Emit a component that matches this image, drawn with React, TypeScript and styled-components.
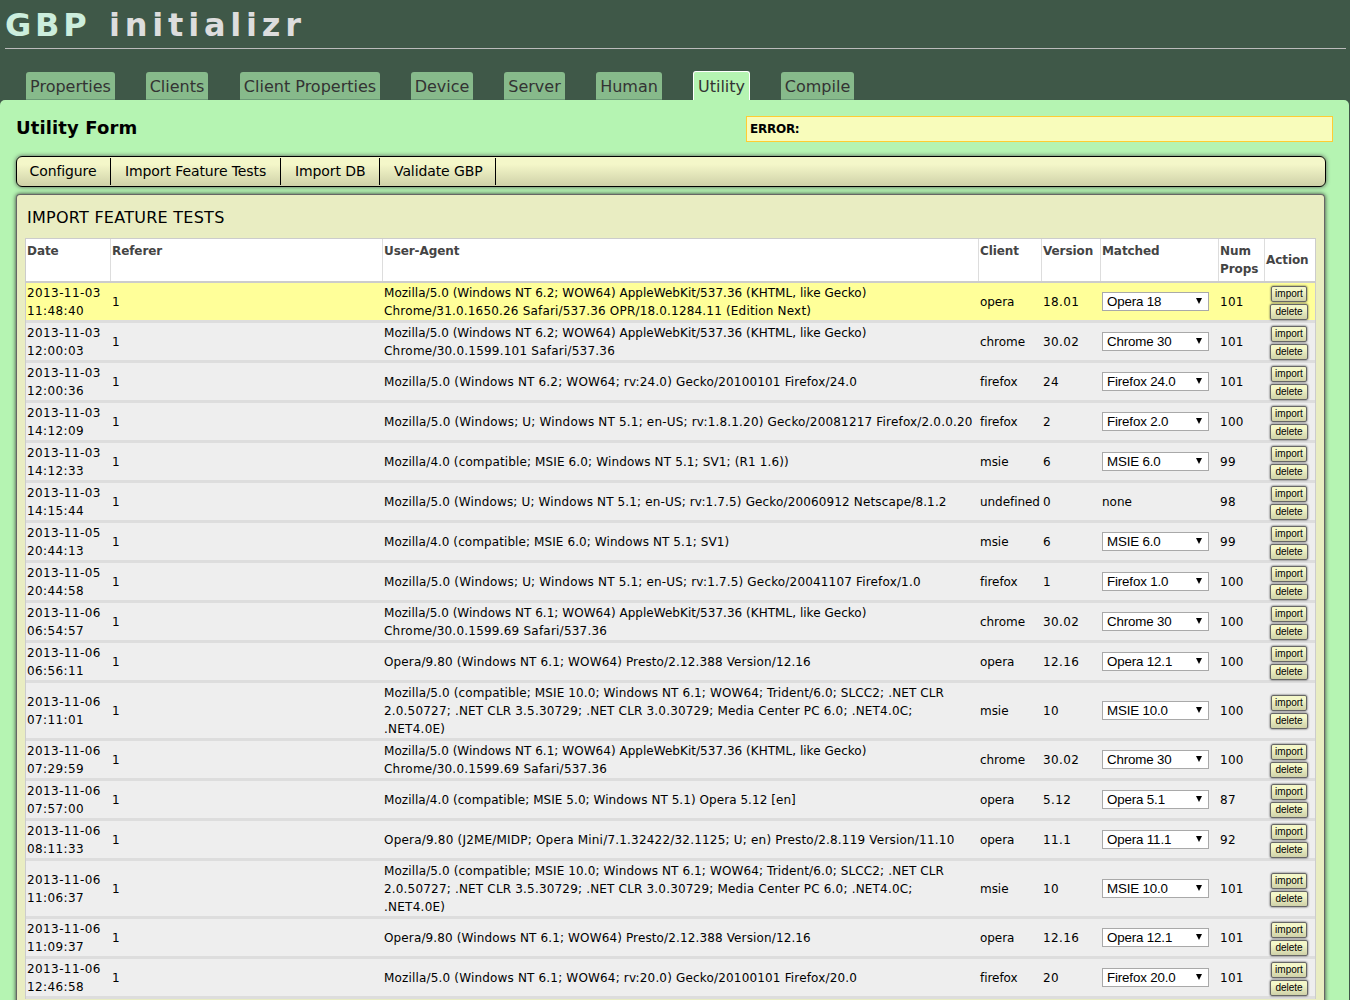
import React from "react";
import styled, { createGlobalStyle, css } from "styled-components";

const GlobalStyle = createGlobalStyle`
  * { box-sizing: border-box; }
  html, body { margin: 0; height: 1000px; overflow: hidden; }
  body {
    background: #3f5848;
    font-family: "DejaVu Sans", Verdana, sans-serif;
    color: #000;
  }
`;

const Page = styled.div`
  width: 1350px;
  height: 1000px;
  overflow: hidden;
`;

const Header = styled.header`
  height: 49px;
  margin: 0 4px 0 5px;
  border-bottom: 1px solid #bbb;
`;

const Title = styled.h1`
  margin: 0;
  padding-top: 5px;
  font-size: 32px;
  line-height: 40px;
  font-weight: bold;
  letter-spacing: 4.8px;
  word-spacing: -0.5px;
  color: #ddd;
  span {
    margin-right: 3px;
    letter-spacing: 3.8px;
    color: #cceedd;
  }
`;

const Tabs = styled.nav`
  display: flex;
  align-items: flex-end;
  gap: 31px;
  height: 51px;
  padding-left: 26px;
`;

const Tab = styled.a<{ $width: number; $active?: boolean }>`
  width: ${(p) => p.$width}px;
  height: 28px;
  padding-top: 5px;
  border-radius: 3px 3px 0 0;
  border-bottom: 1px solid #6b9a76;
  background: #87ba8b;
  color: #333;
  font-size: 16px;
  line-height: 20px;
  text-align: center;
  white-space: nowrap;
  &:nth-child(2) { margin-right: 1px; }
  ${(p) =>
    p.$active &&
    css`
      height: 29px;
      border: 1px solid #fff;
      border-bottom: 0;
      background: #b5f4b2;
    `}
`;

const Panel = styled.main`
  width: 1349px;
  height: 900px;
  padding: 16px 16px 0;
  border-radius: 5px 5px 0 0;
  background: #b5f4b2;
`;

const FormHead = styled.div`
  display: flex;
  justify-content: space-between;
  height: 40px;
`;

const FormTitle = styled.h2`
  margin: 0;
  font-size: 18px;
  line-height: 23px;
  letter-spacing: 0.12px;
`;

const ErrorBox = styled.div`
  width: 587px;
  height: 26px;
  padding-left: 3px;
  border: 1px solid #ffcc33;
  background: #f8fcbb;
  font-size: 12px;
  font-weight: bold;
  line-height: 24px;
  letter-spacing: -0.25px;
`;

const Toolbar = styled.div`
  display: flex;
  width: 1310px;
  height: 31px;
  padding: 1px 0;
  border: 1px solid #000;
  border-radius: 6px;
  background: linear-gradient(#f4f7c9 25%, #cfd1a8);
  box-shadow: 0 0 4px #555;
`;

const ToolItem = styled.a<{ $width: number }>`
  width: ${(p) => p.$width}px;
  padding-left: 14px;
  border-right: 1px solid #000;
  font-size: 14px;
  line-height: 27px;
  letter-spacing: -0.1px;
  white-space: nowrap;
  &:first-child { padding-left: 12.5px; }
`;

const Card = styled.section`
  width: 1309px;
  height: 830px;
  margin-top: 7px;
  padding: 0 8px;
  border: 1px solid #666;
  border-width: 1px 1px 0;
  border-radius: 4px 4px 0 0;
  background: #e9edc2;
  box-shadow: 0 0 4px #333;
`;

const CardTitle = styled.h3`
  margin: 0;
  height: 43px;
  padding: 13px 0 0 2px;
  font-size: 16px;
  font-weight: normal;
  line-height: 20px;
  letter-spacing: 0.26px;
`;

const Table = styled.div`
  border: 1px solid #ccc;
  border-bottom: 0;
  font-size: 12px;
  line-height: 18px;
`;

const columns = css`
  display: grid;
  grid-template-columns: 84px 272px 596px 63px 59px 118px 46px 51px;
`;

const HeadRow = styled.div`
  ${columns}
  height: 44px;
  border-bottom: 2px solid #ccc;
  background: #fff;
`;

const HeadCell = styled.div<{ $middle?: boolean }>`
  padding: ${(p) => (p.$middle ? 12 : 3)}px 0 0 1px;
  border-left: 1px solid #ddd;
  color: #444;
  font-weight: bold;
  letter-spacing: -0.08px;
  &:first-child { border-left: 0; }
`;

const Row = styled.div<{ $tall: boolean; $highlight: boolean }>`
  ${columns}
  align-items: center;
  height: ${(p) => (p.$tall ? 58 : 40)}px;
  border-bottom: 3px solid #ddd;
  background: ${(p) => (p.$highlight ? "#ffff99" : "#eee")};
`;

const Cell = styled.div<{ $tracking?: number }>`
  position: relative;
  padding-left: 2px;
  white-space: pre;
  letter-spacing: ${(p) => p.$tracking ?? 0}px;
  &:first-child { padding-left: 1px; }
`;

const Line = styled.div<{ $tracking: number }>`
  height: 18px;
  letter-spacing: ${(p) => p.$tracking}px;
`;

const Select = styled.div`
  display: flex;
  align-items: center;
  justify-content: space-between;
  width: 107px;
  height: 19px;
  padding: 0 6px 0 4px;
  border: 1px solid #a9a9a9;
  background: #fff;
  font: 13.33px/17px "Liberation Sans", Arial, sans-serif;
  letter-spacing: -0.15px;
`;

const Arrow = styled.i`
  width: 0;
  height: 0;
  margin-bottom: 2px;
  border: 3px solid transparent;
  border-top: 6px solid #000;
  border-bottom: 0;
`;

const Actions = styled.div`
  display: flex;
  flex-direction: column;
  align-items: center;
  gap: 2px;
  padding: 2px 1px 0 0;
`;

const ActionButton = styled.button<{ $width: number }>`
  width: ${(p) => p.$width}px;
  height: 16px;
  padding: 0;
  border: 1px solid #666;
  border-radius: 2px;
  background: linear-gradient(#f4f7c9 25%, #cfd1a8);
  box-shadow: 0 0 2px #333;
  color: #000;
  font: 10px/12px "Liberation Sans", Arial, sans-serif;
`;

const tabs = [
  { label: "Properties", width: 89 },
  { label: "Clients", width: 62 },
  { label: "Client Properties", width: 140 },
  { label: "Device", width: 62 },
  { label: "Server", width: 61 },
  { label: "Human", width: 66 },
  { label: "Utility", width: 57, active: true },
  { label: "Compile", width: 73 },
];

const tools = [
  { label: "Configure", width: 94 },
  { label: "Import Feature Tests", width: 170 },
  { label: "Import DB", width: 99 },
  { label: "Validate GBP", width: 116 },
];

type AgentLine = [text: string, tracking: number];

const IE10: AgentLine[] = [
  ["Mozilla/5.0 (compatible; MSIE 10.0; Windows NT 6.1; WOW64; Trident/6.0; SLCC2; .NET CLR", 0.12],
  ["2.0.50727; .NET CLR 3.5.30729; .NET CLR 3.0.30729; Media Center PC 6.0; .NET4.0C;", 0.18],
  [".NET4.0E)", 0.25],
];
const CHROME_WIN7: AgentLine[] = [
  ["Mozilla/5.0 (Windows NT 6.1; WOW64) AppleWebKit/537.36 (KHTML, like Gecko)", 0.03],
  ["Chrome/30.0.1599.69 Safari/537.36", 0.22],
];
const OPERA12: AgentLine[] = [
  ["Opera/9.80 (Windows NT 6.1; WOW64) Presto/2.12.388 Version/12.16", 0.13],
];

const rows: [string, AgentLine[], string, string, string, string][] = [
  ["2013-11-03\n11:48:40", [["Mozilla/5.0 (Windows NT 6.2; WOW64) AppleWebKit/537.36 (KHTML, like Gecko)", 0.03], ["Chrome/31.0.1650.26 Safari/537.36 OPR/18.0.1284.11 (Edition Next)", 0.18]], "opera", "18.01", "Opera 18", "101"],
  ["2013-11-03\n12:00:03", [["Mozilla/5.0 (Windows NT 6.2; WOW64) AppleWebKit/537.36 (KHTML, like Gecko)", 0.03], ["Chrome/30.0.1599.101 Safari/537.36", 0.22]], "chrome", "30.02", "Chrome 30", "101"],
  ["2013-11-03\n12:00:36", [["Mozilla/5.0 (Windows NT 6.2; WOW64; rv:24.0) Gecko/20100101 Firefox/24.0", 0.17]], "firefox", "24", "Firefox 24.0", "101"],
  ["2013-11-03\n14:12:09", [["Mozilla/5.0 (Windows; U; Windows NT 5.1; en-US; rv:1.8.1.20) Gecko/20081217 Firefox/2.0.0.20", 0.18]], "firefox", "2", "Firefox 2.0", "100"],
  ["2013-11-03\n14:12:33", [["Mozilla/4.0 (compatible; MSIE 6.0; Windows NT 5.1; SV1; (R1 1.6))", 0.13]], "msie", "6", "MSIE 6.0", "99"],
  ["2013-11-03\n14:15:44", [["Mozilla/5.0 (Windows; U; Windows NT 5.1; en-US; rv:1.7.5) Gecko/20060912 Netscape/8.1.2", 0.14]], "undefined", "0", "", "98"],
  ["2013-11-05\n20:44:13", [["Mozilla/4.0 (compatible; MSIE 6.0; Windows NT 5.1; SV1)", 0.09]], "msie", "6", "MSIE 6.0", "99"],
  ["2013-11-05\n20:44:58", [["Mozilla/5.0 (Windows; U; Windows NT 5.1; en-US; rv:1.7.5) Gecko/20041107 Firefox/1.0", 0.17]], "firefox", "1", "Firefox 1.0", "100"],
  ["2013-11-06\n06:54:57", CHROME_WIN7, "chrome", "30.02", "Chrome 30", "100"],
  ["2013-11-06\n06:56:11", OPERA12, "opera", "12.16", "Opera 12.1", "100"],
  ["2013-11-06\n07:11:01", IE10, "msie", "10", "MSIE 10.0", "100"],
  ["2013-11-06\n07:29:59", CHROME_WIN7, "chrome", "30.02", "Chrome 30", "100"],
  ["2013-11-06\n07:57:00", [["Mozilla/4.0 (compatible; MSIE 5.0; Windows NT 5.1) Opera 5.12 [en]", 0.055]], "opera", "5.12", "Opera 5.1", "87"],
  ["2013-11-06\n08:11:33", [["Opera/9.80 (J2ME/MIDP; Opera Mini/7.1.32422/32.1125; U; en) Presto/2.8.119 Version/11.10", 0.2]], "opera", "11.1", "Opera 11.1", "92"],
  ["2013-11-06\n11:06:37", IE10, "msie", "10", "MSIE 10.0", "101"],
  ["2013-11-06\n11:09:37", OPERA12, "opera", "12.16", "Opera 12.1", "101"],
  ["2013-11-06\n12:46:58", [["Mozilla/5.0 (Windows NT 6.1; WOW64; rv:20.0) Gecko/20100101 Firefox/20.0", 0.17]], "firefox", "20", "Firefox 20.0", "101"],
];

export default function App() {
  return (
    <Page>
      <GlobalStyle />
      <Header>
        <Title><span>GBP</span> initializr</Title>
      </Header>
      <Tabs>
        {tabs.map((t) => (
          <Tab key={t.label} $width={t.width} $active={t.active}>{t.label}</Tab>
        ))}
      </Tabs>
      <Panel>
        <FormHead>
          <FormTitle>Utility Form</FormTitle>
          <ErrorBox>ERROR:</ErrorBox>
        </FormHead>
        <Toolbar>
          {tools.map((t) => (
            <ToolItem key={t.label} $width={t.width}>{t.label}</ToolItem>
          ))}
        </Toolbar>
        <Card>
          <CardTitle>IMPORT FEATURE TESTS</CardTitle>
          <Table>
            <HeadRow>
              <HeadCell>Date</HeadCell>
              <HeadCell>Referer</HeadCell>
              <HeadCell>User-Agent</HeadCell>
              <HeadCell>Client</HeadCell>
              <HeadCell>Version</HeadCell>
              <HeadCell>Matched</HeadCell>
              <HeadCell>Num<br />Props</HeadCell>
              <HeadCell $middle>Action</HeadCell>
            </HeadRow>
            {rows.map(([date, agent, client, version, match, props], i) => (
              <Row key={i} $tall={agent === IE10} $highlight={i === 0}>
                <Cell $tracking={0.4}>{date}</Cell>
                <Cell>1</Cell>
                <Cell>
                  {agent.map(([text, tracking]) => (
                    <Line key={text} $tracking={tracking}>{text}</Line>
                  ))}
                </Cell>
                <Cell $tracking={-0.05}>{client}</Cell>
                <Cell $tracking={0.4}>{version}</Cell>
                <Cell>{match ? <Select>{match}<Arrow /></Select> : "none"}</Cell>
                <Cell $tracking={0.3}>{props}</Cell>
                <Actions>
                  <ActionButton $width={36}>import</ActionButton>
                  <ActionButton $width={38}>delete</ActionButton>
                </Actions>
              </Row>
            ))}
          </Table>
        </Card>
      </Panel>
    </Page>
  );
}
